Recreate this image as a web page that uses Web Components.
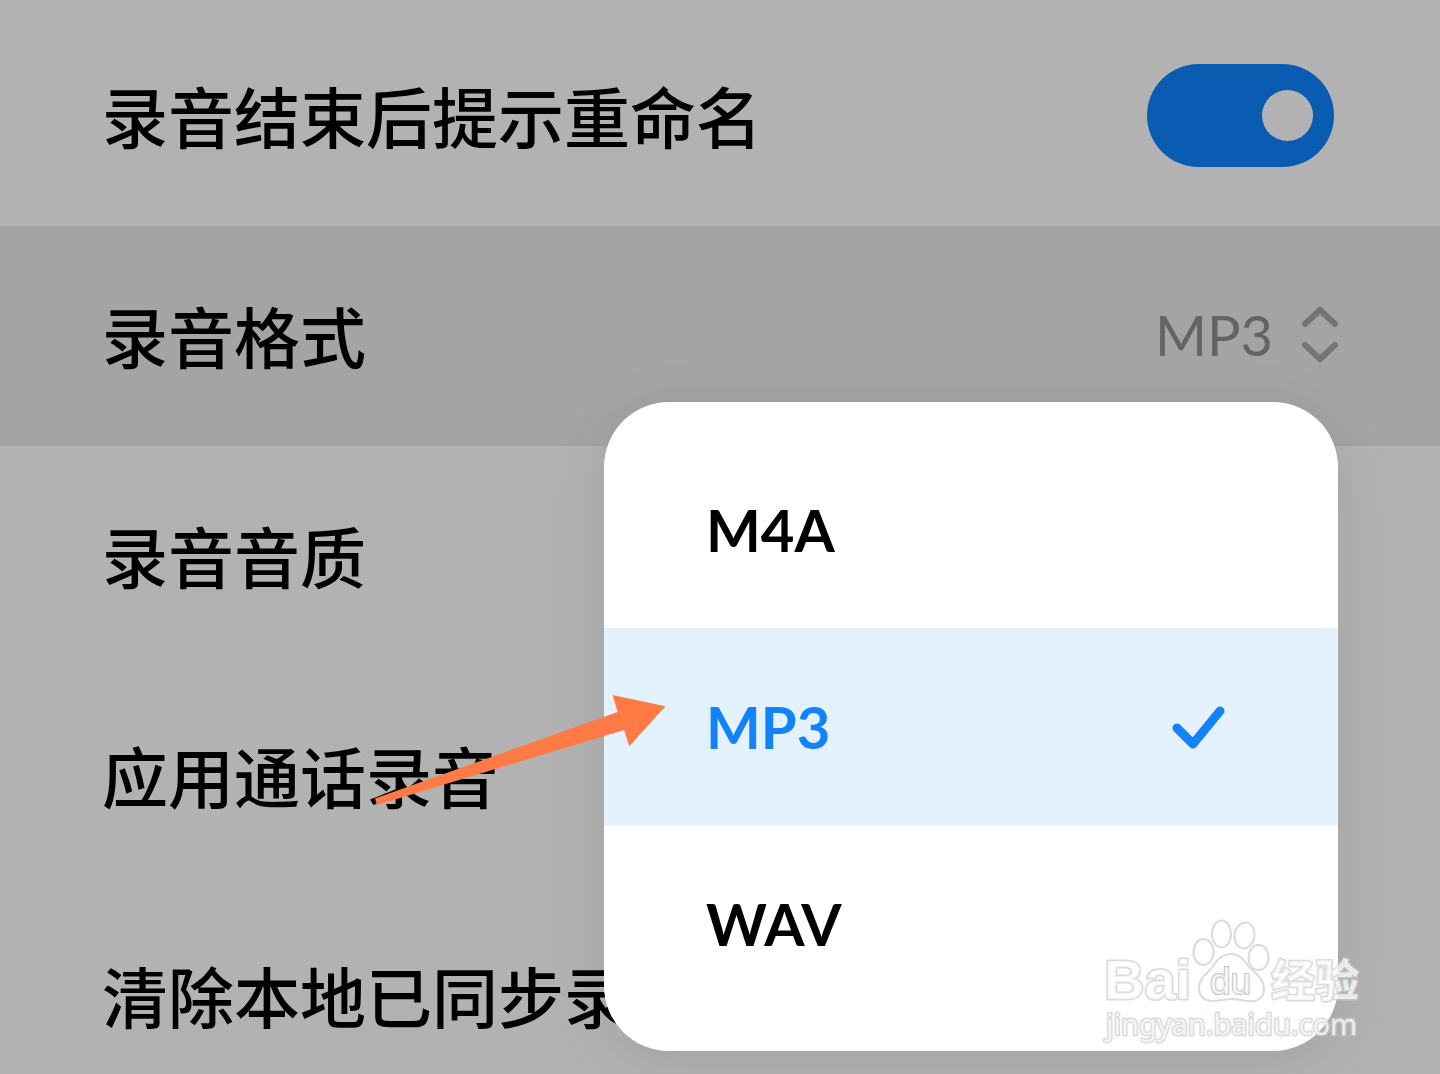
<!DOCTYPE html>
<html lang="zh-CN">
<head>
<meta charset="utf-8">
<title>录音设置</title>
<style>
  body { margin: 0; background: #b2b2b2; font-family: Lato, "Noto Sans CJK SC", sans-serif; color: #000; }
</style>
</head>
<body>
<settings-page>
  <setting-row label="录音结束后提示重命名"><toggle-switch label="录音结束后提示重命名"></toggle-switch></setting-row>
  <setting-row label="录音格式" active>
    <value-picker value="MP3"></value-picker>
    <option-menu slot="menu" label="录音格式">
      <menu-option>M4A</menu-option>
      <menu-option selected>MP3</menu-option>
      <menu-option>WAV</menu-option>
    </option-menu>
  </setting-row>
  <setting-row label="录音音质"></setting-row>
  <setting-row label="应用通话录音"></setting-row>
  <setting-row label="清除本地已同步录音"></setting-row>
  <pointer-arrow slot="overlay"></pointer-arrow>
  <site-watermark slot="overlay"></site-watermark>
</settings-page>

<script>
const define = (name, html, setup) => {
  customElements.define(name, class extends HTMLElement {
    constructor() {
      super();
      this.attachShadow({ mode: "open" });
    }
    connectedCallback() {
      if (this.shadowRoot.childNodes.length) return;
      const t = document.createElement("template");
      t.innerHTML = html;
      this.shadowRoot.append(t.content.cloneNode(true));
      if (setup) setup(this, this.shadowRoot);
    }
  });
};

define("settings-page", `
  <style>
    :host { display: block; position: relative; height: 100vh; overflow: hidden; }
    main { display: flex; flex-direction: column; padding-top: 6px; }
  </style>
  <main><slot></slot></main>
  <slot name="overlay"></slot>`);

define("setting-row", `
  <style>
    :host { display: block; position: relative; }
    :host([active]) { background: #a4a4a4; }
    .row { display: flex; align-items: center; justify-content: space-between; box-sizing: border-box;
      height: 220px; padding: 0 102px 2px; }
    .label { padding-bottom: 2px; font: 500 66px/96px "Noto Sans CJK SC", sans-serif; white-space: nowrap; }
  </style>
  <div class="row"><span class="label"></span><slot></slot></div>
  <slot name="menu"></slot>`,
  (host, root) => { root.querySelector(".label").textContent = host.getAttribute("label"); });

define("toggle-switch", `
  <style>
    :host { display: block; padding-right: 4px; }
    input { appearance: none; display: flex; align-items: center; justify-content: flex-end; box-sizing: border-box;
      width: 187px; height: 103px; margin: 0; padding: 0 21px; border-radius: 52px; background: #0a5cb3; }
    input:not(:checked) { justify-content: flex-start; background: #8c8c8c; }
    input::before { content: ""; width: 51px; height: 51px; border-radius: 50%; background: #b2b2b2; }
  </style>
  <input type="checkbox" role="switch" checked>`,
  (host, root) => root.querySelector("input").setAttribute("aria-label", host.getAttribute("label")));

define("value-picker", `
  <style>
    :host { display: block; }
    button { display: flex; align-items: center; gap: 28px; padding: 0; border: 0; background: none;
      font: 400 56px/72px Lato, sans-serif; color: #646464; }
    svg { display: block; }
  </style>
  <button type="button" aria-haspopup="listbox" aria-expanded="true"><span></span>
    <svg width="37" height="58" viewBox="0 0 37 58" fill="none" stroke="#757575" stroke-width="6" stroke-linecap="round" stroke-linejoin="round">
      <path d="M4 18 19 4 34 18M4 39 19 53 34 39"/>
    </svg>
  </button>`,
  (host, root) => { root.querySelector("span").textContent = host.getAttribute("value"); });

define("option-menu", `
  <style>
    :host { display: block; position: absolute; z-index: 1; top: 176px; right: 102px; width: 734px; }
    div { display: flex; flex-direction: column; padding: 29px 0; border-radius: 65px; background: #fff;
      box-shadow: 0 10px 60px rgba(0, 0, 0, .09); }
  </style>
  <div role="listbox"><slot></slot></div>`,
  (host, root) => root.querySelector("div").setAttribute("aria-label", host.getAttribute("label")));

define("menu-option", `
  <style>
    :host { display: block; }
    button { display: flex; align-items: center; justify-content: space-between; width: 100%; height: 197px;
      padding: 0 112px 0 102px; border: 0; background: none; color: #000; text-align: left;
      font: 700 58px/72px Lato, sans-serif; }
    svg { display: none; }
    :host([selected]) button { background: #e4f1ff; color: #1283fb; }
    :host([selected]) svg { display: block; }
  </style>
  <button type="button" role="option"><span><slot></slot></span>
    <svg width="54" height="44" viewBox="0 0 54 44" fill="none" stroke="#1283fb" stroke-width="9" stroke-linecap="round" stroke-linejoin="round">
      <path d="M5 23 21 39 48 6"/>
    </svg>
  </button>`,
  (host, root) => root.querySelector("button").setAttribute("aria-selected", host.hasAttribute("selected")));

define("pointer-arrow", `
  <style>
    :host { display: block; position: absolute; z-index: 2; left: 374px; top: 695px; pointer-events: none; }
    svg { display: block; }
  </style>
  <svg width="292" height="111" viewBox="0 0 292 111" fill="#ff7a45" aria-hidden="true">
    <path d="M1 103.500 L243.700 17 L238.600 0 L291.300 11.300 L255.300 51.300 L250 35 L3 110 Z"/>
  </svg>`);

define("site-watermark", `
  <style>
    :host { display: block; position: absolute; z-index: 3; right: 70px; bottom: 24px; pointer-events: none; }
    svg { display: block; }
    text { paint-order: stroke; }
  </style>
  <svg width="270" height="136" viewBox="0 0 270 136" fill="#fff" fill-opacity=".72" stroke="#ccc" stroke-opacity=".7" stroke-width="2" stroke-linejoin="round">
    <ellipse cx="103.500" cy="38" rx="10" ry="13"/>
    <ellipse cx="121.500" cy="20" rx="9.500" ry="13.500"/>
    <ellipse cx="144.500" cy="21.500" rx="10" ry="13" transform="rotate(8 144.500 21.500)"/>
    <ellipse cx="158.500" cy="43.500" rx="10" ry="12.500"/>
    <path d="M131 40 C140 40 145 47 149 53 C156 60 164 65 164 75 C164 84 157 88 149 87 C140 86 136 85 131 85 C126 85 121 87 113 87 C104 87 99 82 99 73 C99 64 108 59 113 52 C117 45 122 40 131 40 Z"/>
    <text x="4" y="85" font-family="Liberation Sans" font-weight="700" font-size="56" stroke-width="3">Bai</text>
    <text x="110" y="80" font-family="Liberation Sans" font-size="37" stroke="#aaa">du</text>
    <text x="171" y="83" font-family="Noto Sans CJK SC" font-weight="700" font-size="44" stroke-width="3">经验</text>
    <text x="6" y="121" font-family="Noto Sans" font-size="29" stroke-width="3">jingyan.baidu.com</text>
  </svg>`);
</script>
</body>
</html>
